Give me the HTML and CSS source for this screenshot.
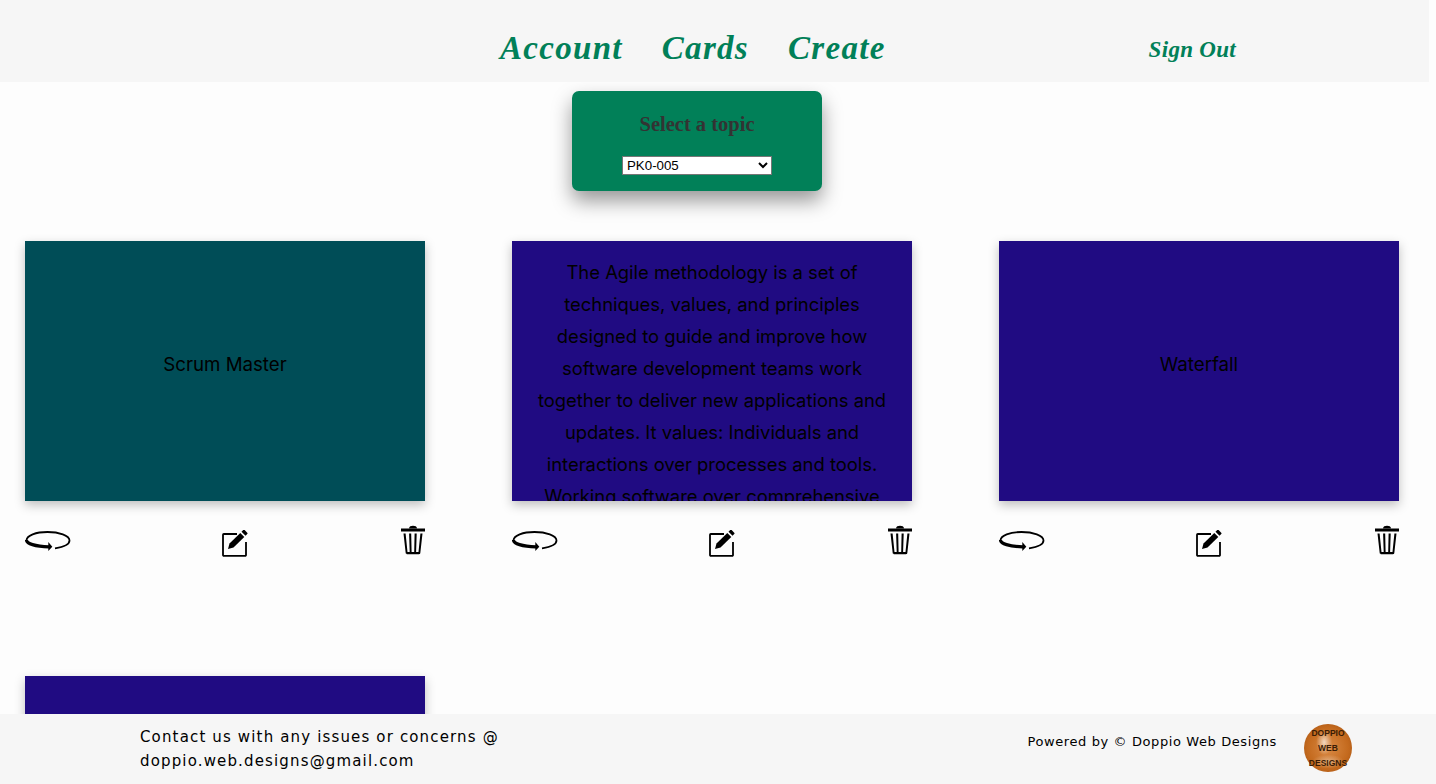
FILE: index.html
```html
<!DOCTYPE html>
<html lang="en">
<head>
  <meta charset="UTF-8">
  <title>Cards</title>
  <link rel="stylesheet" href="styles.css">
</head>
<body>
  <header class="top-bar">
    <nav class="main-nav">
      <a href="#">Account</a>
      <a href="#">Cards</a>
      <a href="#">Create</a>
    </nav>
    <a class="sign-out" href="#">Sign Out</a>
  </header>

  <main class="content">
    <section class="topic-box">
      <h2>Select a topic</h2>
      <select>
        <option>PK0-005</option>
      </select>
    </section>

    <div class="card-grid">
      <div class="card">
        <div class="card-face teal"><p>Scrum Master</p></div>
        <div class="card-actions">
          <svg class="icon-flip" width="46" height="24" viewBox="0 0 46 24"><use href="#flip"/></svg>
          <svg class="icon-edit" width="26" height="27" viewBox="0 0 26 27"><use href="#edit"/></svg>
          <svg class="icon-trash" width="26" height="30" viewBox="0 0 26 30"><use href="#trash"/></svg>
        </div>
      </div>
      <div class="card">
        <div class="card-face purple long">
          <p>The Agile methodology is a set of techniques, values, and principles designed to guide and improve how software development teams work together to deliver new applications and updates. It values: Individuals and interactions over processes and tools. Working software over comprehensive documentation.</p>
        </div>
        <div class="card-actions">
          <svg class="icon-flip" width="46" height="24" viewBox="0 0 46 24"><use href="#flip"/></svg>
          <svg class="icon-edit" width="26" height="27" viewBox="0 0 26 27"><use href="#edit"/></svg>
          <svg class="icon-trash" width="26" height="30" viewBox="0 0 26 30"><use href="#trash"/></svg>
        </div>
      </div>
      <div class="card">
        <div class="card-face purple"><p>Waterfall</p></div>
        <div class="card-actions">
          <svg class="icon-flip" width="46" height="24" viewBox="0 0 46 24"><use href="#flip"/></svg>
          <svg class="icon-edit" width="26" height="27" viewBox="0 0 26 27"><use href="#edit"/></svg>
          <svg class="icon-trash" width="26" height="30" viewBox="0 0 26 30"><use href="#trash"/></svg>
        </div>
      </div>
      <div class="card">
        <div class="card-face purple"></div>
      </div>
    </div>
  </main>

  <footer class="bottom-bar">
    <p class="contact">Contact us with any issues or concerns @ doppio.web.designs@gmail.com</p>
    <div class="powered">
      <span>Powered by © Doppio Web Designs</span>
      <div class="logo"><span>DOPPIO</span><span>WEB</span><span>DESIGNS</span></div>
    </div>
  </footer>

  <svg class="icon-defs" width="0" height="0">
    <symbol id="flip" viewBox="0 0 46 24">
      <path d="M30 20.300C38.500 19 44.500 16 44.500 12.500 44.500 7.500 34 4 22.500 4 11 4 1.500 7.500 1.500 12.500" fill="none" stroke="#000" stroke-width="1.800"/>
      <path d="M1.500 12C1.500 15.500 10 18.500 24 18.800" fill="none" stroke="#000" stroke-width="3.200"/>
      <path d="M23.300 14l4 4.700-4 4.300z" fill="#000"/>
    </symbol>
    <symbol id="edit" viewBox="0 0 26 27">
      <path d="M15 4H1.800A.8.8 0 0 0 1 4.800V25a.8.8 0 0 0 .8.8h21.400a.8.8 0 0 0 .8-.8V12" fill="none" stroke="#000" stroke-width="1.800"/>
      <path d="M6 19l1.500-5.500L18.300 3l4 4L11.500 17.500z" fill="#000"/>
      <path d="M19.500 1.800l1.700-1.700a1 1 0 0 1 1.400 0l2.600 2.600a1 1 0 0 1 0 1.400l-1.700 1.700z" fill="#000"/>
    </symbol>
    <symbol id="trash" viewBox="-1 0 26 30">
      <path d="M9 3.500C9 1.500 11 .8 13 .8s4 .7 4 2.700z" fill="#000"/>
      <rect x="1" y="3.500" width="24" height="3" fill="#000"/>
      <path d="M3.500 8.500l2.200 19.500c.1.800.6 1.200 1.300 1.200h12c.7 0 1.200-.4 1.300-1.200l2.200-19.500h-2.100l-1.900 18.500h-2.400l.6-18.500h-2.100l-.4 18.500h-2.600l-.4-18.500H9.100l.6 18.500H7.500L5.600 8.500z" fill="#000"/>
    </symbol>
  </svg>
</body>
</html>
```

FILE: styles.css
```css
body {
  display: flex;
  flex-direction: column;
  height: 100vh;
  margin: 0;
  overflow: hidden;
  background-color: #fdfdfd;
  color: #000;
  font-family: "Inter", "Liberation Sans", sans-serif;
}

.top-bar {
  display: flex;
  align-items: center;
  flex-shrink: 0;
  height: 82px;
  margin-right: 7px;
  background-color: #f6f6f6;
}

.main-nav {
  display: flex;
  gap: 39px;
  margin: 15px 0 0 500px;
}

.main-nav a,
.sign-out {
  color: #018058;
  font-family: "Liberation Serif", serif;
  font-style: italic;
  font-weight: bold;
  text-decoration: none;
}

.main-nav a {
  font-size: 33px;
  letter-spacing: 1.300px;
}

.sign-out {
  margin: 18px 0 0 263px;
  font-size: 23px;
  letter-spacing: .3px;
}

.content {
  flex: 1;
  min-height: 0;
  overflow: hidden;
}

.topic-box {
  display: flex;
  flex-direction: column;
  align-items: center;
  box-sizing: border-box;
  width: 250px;
  height: 100px;
  margin: 9px 0 0 572px;
  padding-top: 22px;
  background-color: #018058;
  border-radius: 7px;
  box-shadow: 0 10px 20px rgba(0, 0, 0, .4);
}

.topic-box h2 {
  margin: 0 0 21px;
  color: #333;
  font-family: "Liberation Serif", serif;
  font-size: 20.500px;
  font-weight: bold;
  line-height: 22px;
}

.topic-box select {
  width: 150px;
  height: 19px;
  padding: 0;
  background-color: #fff;
  border: 1px solid #767676;
  border-radius: 0;
  font-family: "Liberation Sans", sans-serif;
  font-size: 13.300px;
}

.card-grid {
  display: grid;
  grid-template-columns: repeat(3, 400px);
  column-gap: 87px;
  row-gap: 85px;
  padding: 50px 0 0 25px;
}

.card-face {
  display: flex;
  align-items: center;
  justify-content: center;
  box-sizing: border-box;
  height: 260px;
  padding: 16px 24px 28px;
  overflow: hidden;
  box-shadow: 0 4px 10px rgba(0, 0, 0, .25);
  font-size: 18.700px;
  line-height: 32px;
  text-align: center;
}

.card-face p {
  margin: 0;
}

.card-face.long {
  align-items: flex-start;
  padding-top: 15px;
  font-size: 18.400px;
}

.teal {
  background-color: #004d57;
}

.purple {
  background-color: #200b82;
}

.card-actions {
  display: flex;
  justify-content: space-between;
  align-items: flex-start;
  box-sizing: border-box;
  height: 90px;
  padding-top: 25px;
}

.icon-flip {
  margin-top: 2px;
}

.icon-edit {
  margin-top: 4px;
}

.icon-trash {
  margin-top: -1px;
}

.icon-defs {
  position: absolute;
}

.bottom-bar {
  display: flex;
  align-items: center;
  justify-content: space-between;
  flex-shrink: 0;
  height: 70px;
  padding: 0 84px 0 140px;
  background-color: #f6f6f6;
  font-family: "DejaVu Sans", sans-serif;
}

.contact {
  width: 375px;
  margin: 0 0 1px;
  font-size: 15px;
  letter-spacing: 1.150px;
  line-height: 24px;
}

.powered {
  display: flex;
  align-items: center;
  gap: 27px;
  margin-bottom: 2px;
  font-size: 13px;
  letter-spacing: .6px;
}

.powered > span {
  margin-bottom: 14px;
}

.logo {
  display: flex;
  flex-direction: column;
  align-items: center;
  justify-content: center;
  width: 48px;
  height: 48px;
  background:
    radial-gradient(ellipse 8px 13px at 42% 38%, rgba(245, 225, 205, .9), transparent),
    radial-gradient(ellipse 16px 7px at 50% 78%, rgba(240, 210, 180, .6), transparent),
    radial-gradient(circle at 50% 50%, #d98a45 0%, #c46a1e 60%, #9c4c10 100%);
  border-radius: 50%;
  color: #3a1c05;
  font-family: "Liberation Sans", sans-serif;
  font-size: 8.500px;
  font-weight: bold;
  letter-spacing: 0;
  line-height: 15px;
}
```
